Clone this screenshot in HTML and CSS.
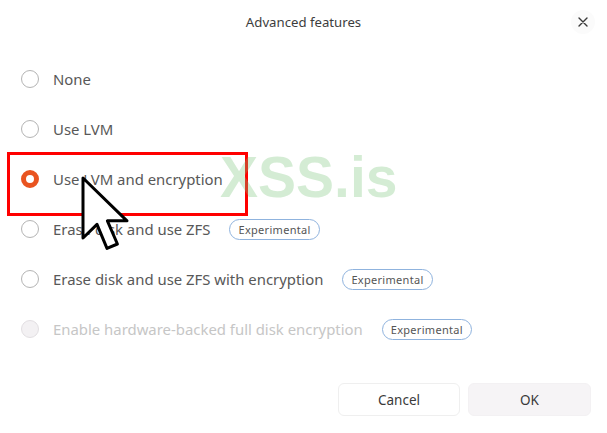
FILE: index.html
```html
<!DOCTYPE html>
<html lang="en">
<head>
<meta charset="utf-8">
<title>Advanced features</title>
<link rel="stylesheet" href="styles.css">
</head>
<body>
<div class="dialog">
  <header class="header">
    <h1 class="title">Advanced features</h1>
    <button class="close" aria-label="Close">
      <svg width="10" height="10" viewBox="0 0 10 10"><path d="M1 1L9 9M9 1L1 9" stroke="#3a3a3a" stroke-width="1.4" stroke-linecap="round"/></svg>
    </button>
  </header>
  <ul class="options">
    <li class="option"><span class="radio"></span><span class="label">None</span></li>
    <li class="option"><span class="radio"></span><span class="label">Use LVM</span></li>
    <li class="option"><span class="radio checked"></span><span class="label">Use LVM and encryption</span></li>
    <li class="option"><span class="radio"></span><span class="label">Erase disk and use ZFS</span><span class="badge">Experimental</span></li>
    <li class="option"><span class="radio"></span><span class="label">Erase disk and use ZFS with encryption</span><span class="badge">Experimental</span></li>
    <li class="option disabled"><span class="radio"></span><span class="label">Enable hardware-backed full disk encryption</span><span class="badge">Experimental</span></li>
  </ul>
  <footer class="footer">
    <button class="btn cancel">Cancel</button>
    <button class="btn ok">OK</button>
  </footer>

  <div class="highlight"></div>
  <div class="watermark">XSS.is</div>
  <svg class="cursor" width="52" height="80" viewBox="0 0 13 20">
    <path d="M1 1L1 16L4.5 12.6L7 18.6L9.6 17.5L7.1 11.7L12 11.7Z" fill="#fff" stroke="#000" stroke-width="0.75" stroke-linejoin="round"/>
  </svg>
</div>
</body>
</html>
```
FILE: styles.css
```css
* { box-sizing: border-box; }
html, body { margin: 0; padding: 0; background: #fff; }
body {
  font-family: "Noto Sans", "Open Sans", sans-serif;
  color: #4a4a4a;
}
.dialog {
  position: relative;
  width: 607px;
  height: 433px;
  display: flex;
  flex-direction: column;
  overflow: hidden;
}
.header {
  height: 44px;
  display: flex;
  align-items: center;
  justify-content: center;
  position: relative;
}
.title {
  margin: 0;
  font-size: 13.2px;
  font-weight: 400;
  color: #3d3d3d;
}
.close {
  position: absolute;
  right: 12px;
  top: 10px;
  width: 24px;
  height: 24px;
  border: none;
  border-radius: 50%;
  background: #fbfbfb;
  display: flex;
  align-items: center;
  justify-content: center;
  padding: 0;
}
.options {
  list-style: none;
  margin: 10px 0 0 0;
  padding: 0 0 0 21px;
}
.option {
  height: 50px;
  display: flex;
  align-items: center;
}
.radio {
  width: 18px;
  height: 18px;
  border-radius: 50%;
  border: 1px solid #b4b4b4;
  background: #fff;
  flex: none;
}
.radio.checked {
  border: 5.5px solid #e95420;
  background: #fff;
}
.label {
  margin-left: 14px;
  font-size: 14.9px;
  color: #585858;
}
.badge {
  margin-left: 19px;
  height: 21px;
  padding: 0 8px;
  border: 1px solid #8fb3de;
  border-radius: 11px;
  font-size: 11px;
  color: #555;
  display: flex;
  align-items: center;
  letter-spacing: 0.3px;
}
.disabled .radio {
  background: #f3f1f3;
  border-color: #e2dfe2;
}
.disabled .label { color: #c6c6c6; }
.footer {
  margin-top: auto;
  height: 50px;
  padding: 0 16px 17px 0;
  display: flex;
  justify-content: flex-end;
  gap: 8px;
}
.btn {
  width: 122px;
  height: 33px;
  border-radius: 6px;
  font-family: inherit;
  font-size: 13.5px;
  color: #3a3a3a;
  padding: 0;
}
.cancel {
  background: #fff;
  border: 1px solid #efefef;
}
.ok {
  width: 123px;
  background: #f6f4f6;
  border: 1px solid #f3f1f3;
}
.highlight {
  position: absolute;
  left: 7px;
  top: 152px;
  width: 241px;
  height: 64px;
  border: 3px solid #ff0000;
}
.watermark {
  position: absolute;
  left: 220px;
  top: 142px;
  font-family: "Liberation Sans", Arial, sans-serif;
  font-weight: 700;
  font-size: 57px;
  line-height: 70px;
  color: rgba(120, 195, 120, 0.32);
}
.cursor {
  position: absolute;
  left: 79px;
  top: 174px;
}
```
